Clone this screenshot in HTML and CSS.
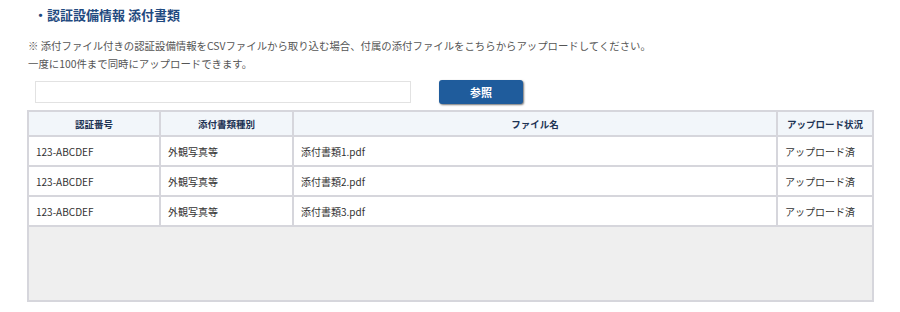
FILE: index.html
```html
<!DOCTYPE html>
<html lang="ja">
<head>
<meta charset="utf-8">
<link rel="stylesheet" href="styles.css">
</head>
<body>
<div class="page">
  <h2 class="title"><span class="bullet">・</span>認証設備情報 添付書類</h2>
  <p class="note">※ 添付ファイル付きの認証設備情報をCSVファイルから取り込む場合、付属の添付ファイルをこちらからアップロードしてください。<br>一度に100件まで同時にアップロードできます。</p>
  <div class="upload">
    <div class="file-input"></div>
    <button class="btn">参照</button>
  </div>
  <table class="files">
    <colgroup>
      <col class="c1"><col class="c2"><col class="c3"><col class="c4">
    </colgroup>
    <thead>
      <tr><th>認証番号</th><th>添付書類種別</th><th>ファイル名</th><th>アップロード状況</th></tr>
    </thead>
    <tbody>
      <tr><td>123-ABCDEF</td><td>外観写真等</td><td>添付書類1.pdf</td><td>アップロード済</td></tr>
      <tr><td>123-ABCDEF</td><td>外観写真等</td><td>添付書類2.pdf</td><td>アップロード済</td></tr>
      <tr><td>123-ABCDEF</td><td>外観写真等</td><td>添付書類3.pdf</td><td>アップロード済</td></tr>
      <tr class="empty"><td colspan="4"></td></tr>
    </tbody>
  </table>
</div>
</body>
</html>
```

FILE: styles.css
```css
html, body {
  margin: 0;
  padding: 0;
  background: #ffffff;
}

body {
  font-family: "Noto Sans CJK JP", "Noto Sans", sans-serif;
  color: #333333;
}

.page {
  padding: 6px 0 0 27px;
  width: 846px;
}

.title {
  margin: 0 0 0 7px;
  font-size: 13px;
  font-weight: bold;
  color: #1f4a80;
  line-height: 18px;
}

.bullet {
  display: inline-block;
  width: 13px;
}

.note {
  margin: 13px 0 0 1px;
  font-size: 10.4px;
  line-height: 18px;
  color: #555555;
}

.upload {
  display: flex;
  align-items: center;
  gap: 28px;
  margin: 7px 0 0 8px;
}

.file-input {
  width: 374px;
  height: 20px;
  border: 1px solid #e2e2e2;
  background: #ffffff;
}

.btn {
  width: 84px;
  height: 24px;
  border: none;
  border-radius: 3px;
  background: #1f5c9c;
  color: #ffffff;
  font-family: inherit;
  font-size: 11px;
  font-weight: bold;
  box-shadow: 1px 1px 2px rgba(0, 0, 0, 0.55);
  padding: 0;
}

.files {
  margin-top: 6px;
  width: 845px;
  border-collapse: collapse;
  table-layout: fixed;
  border: 2px solid #d6d6dc;
}

.c1 { width: 132px; }
.c2 { width: 133px; }
.c3 { width: 484px; }
.c4 { width: 96px; }

.files th,
.files td {
  border: 2px solid #d6d6dc;
  font-size: 10px;
  text-align: left;
  padding: 0 7px;
}

.files th {
  height: 23px;
  background: #f2f6fa;
  color: #1d3354;
  font-weight: bold;
  text-align: center;
  font-size: 9.5px;
}

.files td {
  height: 28px;
  color: #333333;
}

.files .empty td {
  height: 73px;
  background: #efefef;
}
```
